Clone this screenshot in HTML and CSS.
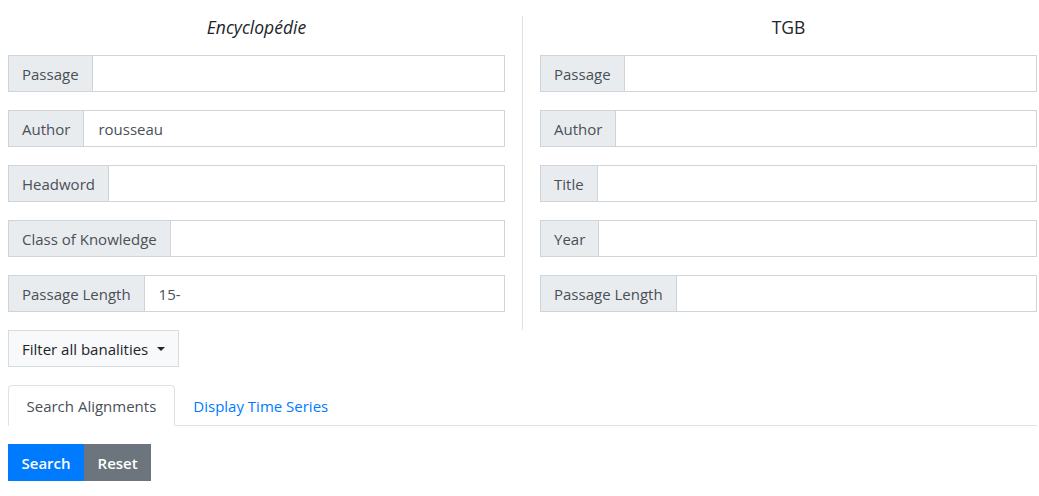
FILE: index.html
```html
<!DOCTYPE html>
<html>
<head>
<meta charset="utf-8">
<link rel="stylesheet" href="styles.css">
</head>
<body>
<div class="page">
  <div class="columns">
    <div class="col">
      <h2 class="col-title"><em>Encyclopédie</em></h2>
      <div class="field"><span class="label">Passage</span><span class="input"></span></div>
      <div class="field"><span class="label">Author</span><span class="input">rousseau</span></div>
      <div class="field"><span class="label">Headword</span><span class="input"></span></div>
      <div class="field"><span class="label">Class of Knowledge</span><span class="input"></span></div>
      <div class="field"><span class="label">Passage Length</span><span class="input">15-</span></div>
    </div>
    <div class="divider"></div>
    <div class="col">
      <h2 class="col-title">TGB</h2>
      <div class="field"><span class="label">Passage</span><span class="input"></span></div>
      <div class="field"><span class="label">Author</span><span class="input"></span></div>
      <div class="field"><span class="label">Title</span><span class="input"></span></div>
      <div class="field"><span class="label">Year</span><span class="input"></span></div>
      <div class="field"><span class="label">Passage Length</span><span class="input"></span></div>
    </div>
  </div>
  <div class="filter-row">
    <button class="filter-btn">Filter all banalities <span class="caret"></span></button>
  </div>
  <div class="tabs">
    <div class="tab active">Search Alignments</div>
    <div class="tab link">Display Time Series</div>
  </div>
  <div class="actions">
    <button class="btn btn-primary">Search</button><button class="btn btn-secondary">Reset</button>
  </div>
</div>
</body>
</html>
```

FILE: styles.css
```css
* { box-sizing: border-box; }
html, body { margin: 0; padding: 0; background: #fff; }
body {
  font-family: "Open Sans", "Liberation Sans", sans-serif;
  font-size: 15px;
  color: #212529;
}
.page { padding: 16px 2px 0 8px; }
.columns { display: flex; }
.col { flex: 1 1 0; min-width: 0; }
.divider { width: 1px; background: #dee2e6; margin: 0 17px; }
.col-title {
  margin: 0 0 15px 0;
  height: 24px;
  line-height: 22px;
  font-size: 17.5px;
  font-weight: 400;
  text-align: center;
  color: #212529;
}
.col-title em { font-style: italic; }
.field {
  display: flex;
  height: 37px;
  margin-bottom: 18px;
}
.label {
  display: flex;
  align-items: center;
  padding: 0 13px;
  background: #e9ecef;
  border: 1px solid #ced4da;
  color: #495057;
  white-space: nowrap;
}
.input {
  flex: 1;
  display: flex;
  align-items: center;
  padding: 0 14px;
  border: 1px solid #ced4da;
  border-left: none;
  background: #fff;
  color: #495057;
}
.filter-row { display: flex; }
.filter-btn {
  height: 37px;
  padding: 0 13px;
  font-family: inherit;
  font-size: 15px;
  color: #212529;
  background: #f8f9fa;
  border: 1px solid #d9dcdf;
  border-radius: 0;
  display: flex;
  align-items: center;
  gap: 9px;
}
.caret {
  width: 0; height: 0;
  border-left: 4px solid transparent;
  border-right: 4px solid transparent;
  border-top: 4px solid #212529;
  margin-top: 1px;
}
.tabs {
  display: flex;
  margin-top: 18px;
  border-bottom: 1px solid #dee2e6;
}
.tab {
  height: 41px;
  padding: 0 17.5px;
  display: flex;
  align-items: center;
  font-size: 15px;
  border: 1px solid transparent;
  border-top-left-radius: 4px;
  border-top-right-radius: 4px;
  margin-bottom: -1px;
}
.tab.active {
  color: #495057;
  background: #fff;
  border-color: #dee2e6 #dee2e6 #fff;
}
.tab.link { color: #007bff; }
.actions { display: flex; margin-top: 18px; }
.btn {
  height: 37px;
  padding: 0 13.5px;
  font-family: inherit;
  font-size: 15px;
  font-weight: 600;
  color: #fff;
  border: none;
  border-radius: 0;
}
.btn-primary { background: #007bff; }
.btn-secondary { background: #6c757d; }
```
